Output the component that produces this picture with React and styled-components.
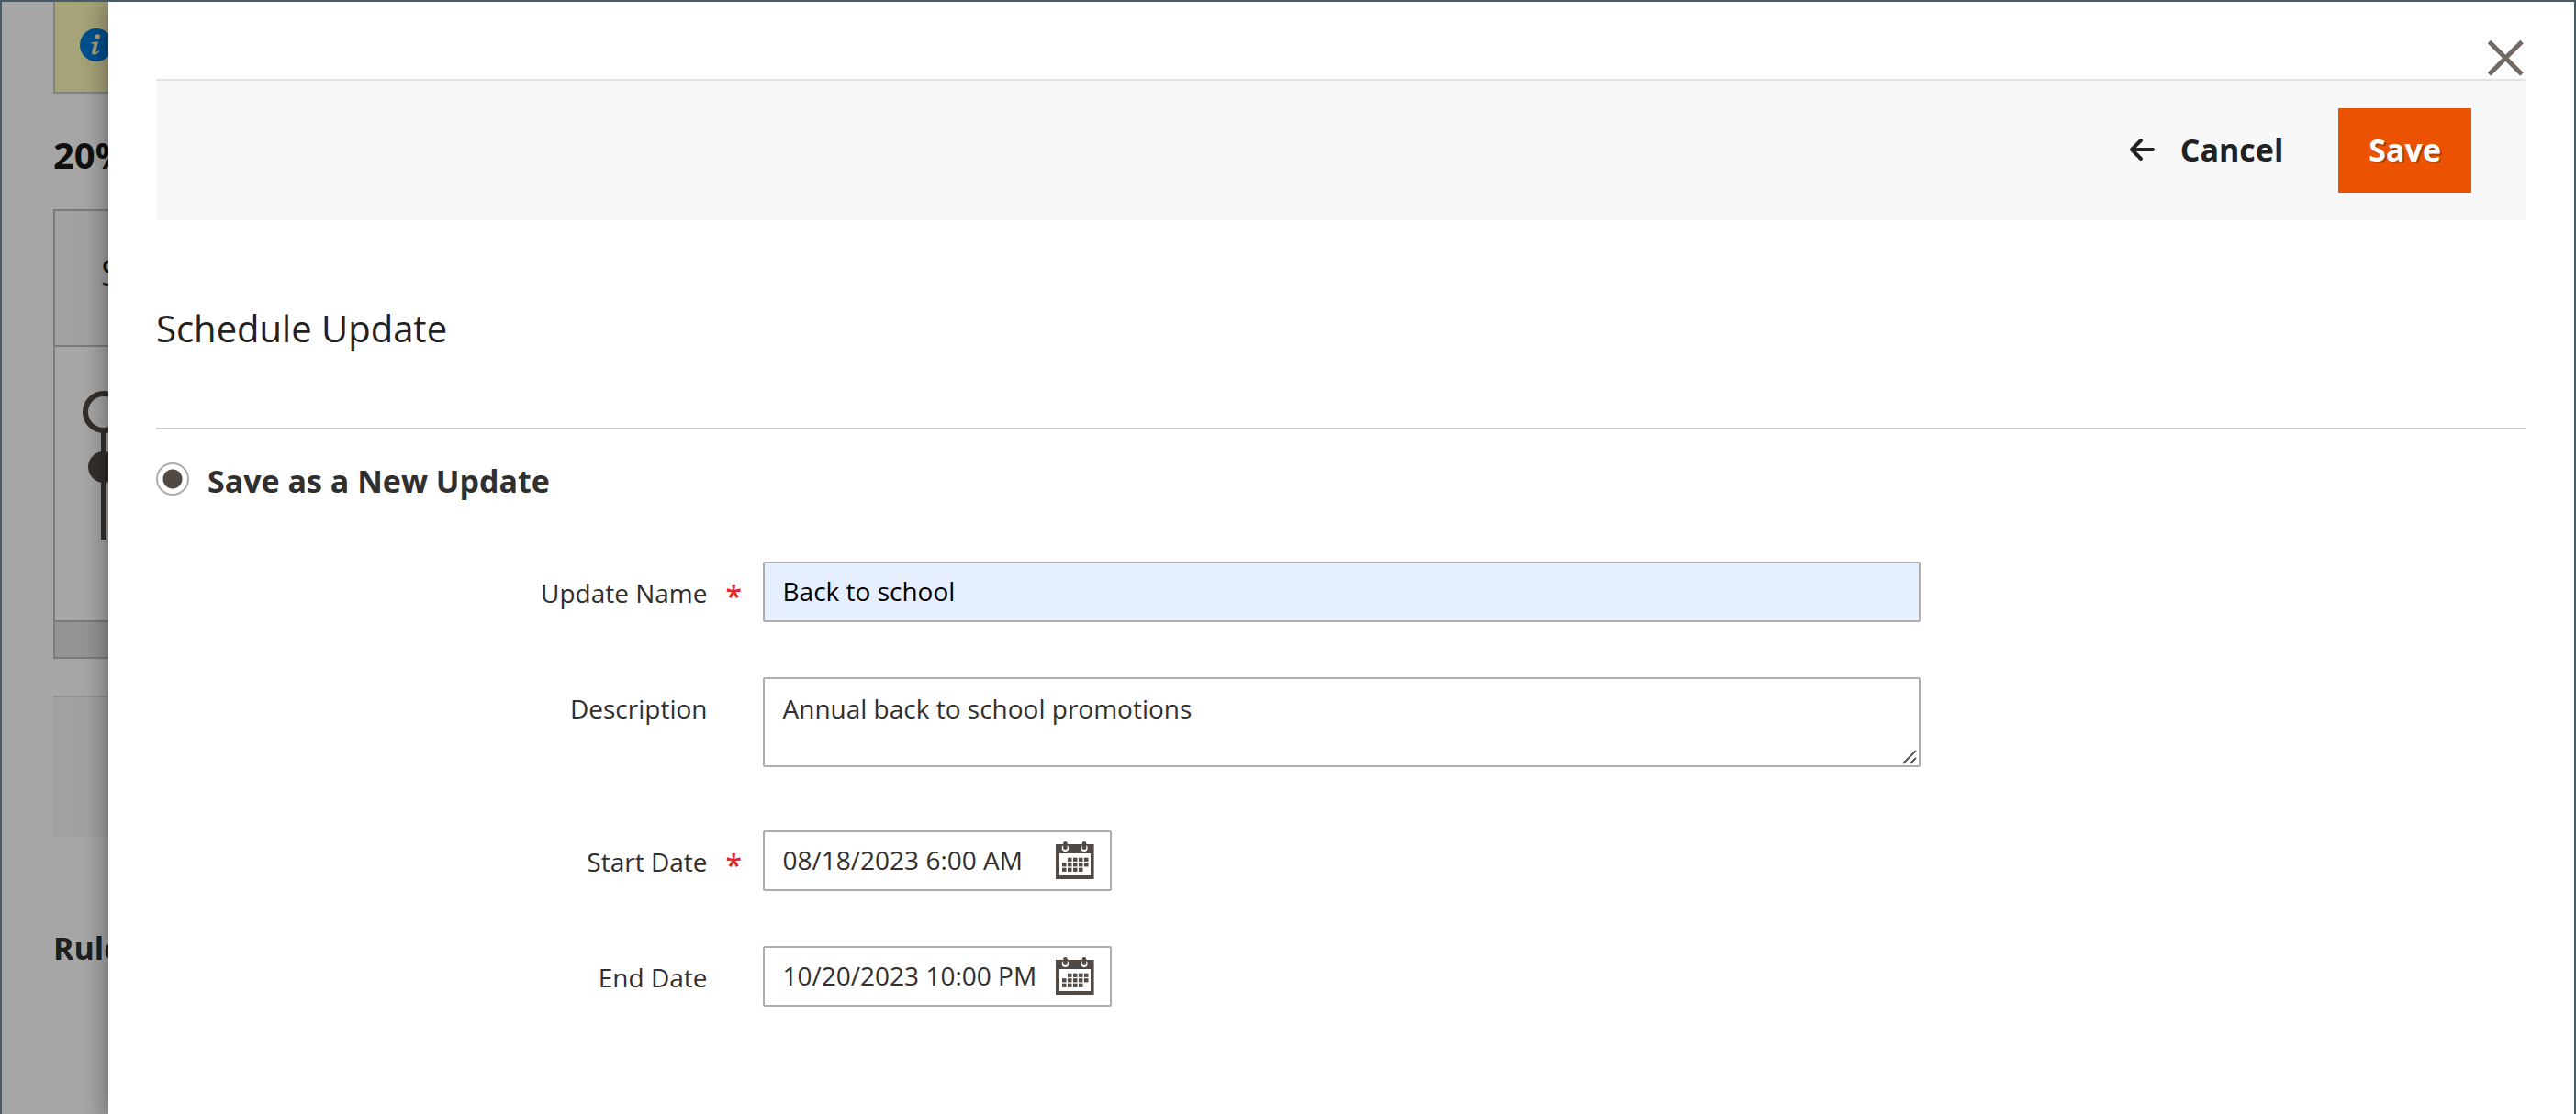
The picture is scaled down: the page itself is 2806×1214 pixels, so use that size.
import React, { useState } from "react";
import styled, { createGlobalStyle } from "styled-components";

const GlobalStyle = createGlobalStyle`
  *, *::before, *::after { box-sizing: border-box; }
  body {
    margin: 0;
    font-family: "Open Sans", "Noto Sans", sans-serif;
    font-size: 28px;
    color: #303030;
    background: #fff;
  }
  button, input, textarea { font: inherit; color: inherit; }
`;

const Frame = styled.div`
  position: relative;
  min-height: 100vh;
  border: 2px solid #465b66;
  border-bottom: 0;
  overflow: hidden;
`;

/* Page behind the panel */
const Backdrop = styled.div`
  position: absolute;
  inset: 0;
  padding-left: 56px;
  overflow: hidden;
  &::after {
    content: "";
    position: absolute;
    inset: 0;
    background: rgba(0, 0, 0, 0.35);
  }
`;

const Notice = styled.div`
  height: 100px;
  padding: 29px 27px;
  background: #fffbbb;
  border: solid #c8c8c8;
  border-width: 0 0 2px 2px;
`;

const RuleName = styled.h2`
  margin: 40px 0 0;
  font-size: 40px;
  font-weight: 700;
  line-height: 54px;
  color: #1a1a1a;
`;

const Timeline = styled.div`
  margin-top: 32px;
  border: 2px solid #bdbdbd;
  border-right: 0;
`;

const TimelineHead = styled.div`
  height: 146px;
  padding: 40px 50px;
  font-size: 40px;
  line-height: 54px;
  color: #1a1a1a;
  background: #f8f8f8;
`;

const TimelineBody = styled.div`
  height: 302px;
  padding: 48px 30px;
  border: solid #bdbdbd;
  border-width: 2px 0;
`;

const TimelineScroll = styled.div`
  height: 38px;
  background: #e3e3e3;
`;

const ActionStrip = styled.div`
  height: 154px;
  margin-top: 40px;
  background: #f8f8f8;
  border-top: 2px solid #e3e3e3;
`;

const SectionName = styled.h3`
  margin: 98px 0 0;
  font-size: 34px;
  font-weight: 700;
  line-height: 46px;
`;

/* Slide-out panel */
const Panel = styled.section`
  position: relative;
  min-height: 100vh;
  margin-left: 116px;
  padding: 0 52px 60px;
  background: #fff;
  box-shadow: 0 0 24px 4px rgba(0, 0, 0, 0.35);
`;

const PanelTop = styled.header`
  display: flex;
  justify-content: flex-end;
  align-items: flex-end;
  height: 84px;
`;

const PlainButton = styled.button`
  display: flex;
  align-items: center;
  padding: 0;
  background: none;
  border: 0;
  cursor: pointer;
`;

const Toolbar = styled.div`
  display: flex;
  justify-content: flex-end;
  align-items: center;
  gap: 60px;
  padding: 30px 60px;
  background: #f8f8f8;
  border-top: 2px solid #e3e3e3;
`;

const ToolbarButton = styled(PlainButton)`
  height: 92px;
  padding-bottom: 2px;
  font-size: 34px;
  font-weight: 700;
`;

const CancelButton = styled(ToolbarButton)`
  gap: 27px;
  color: #222;
`;

const SaveButton = styled(ToolbarButton)`
  padding-left: 33px;
  padding-right: 33px;
  color: #fff;
  background: #eb5202;
  text-shadow: 2px 2px 0 rgba(0, 0, 0, 0.25);
`;

const Title = styled.h1`
  margin: 91px 0 0;
  padding-bottom: 81px;
  font-size: 40px;
  font-weight: 400;
  line-height: 54px;
  color: #222;
  border-bottom: 2px solid #ccc;
`;

const Choice = styled.div`
  display: flex;
  align-items: flex-start;
  gap: 20px;
  margin: 36px 0 68px;
`;

const Radio = styled.input`
  appearance: none;
  width: 36px;
  height: 36px;
  margin: 0;
  border: 2px solid #adadad;
  border-radius: 50%;
  background: radial-gradient(circle, #514943 10px, #fff 11px);
`;

const ChoiceLabel = styled.label`
  font-size: 34px;
  font-weight: 700;
  line-height: 40px;
`;

const Fields = styled.div`
  display: grid;
  gap: 58px;
`;

const Field = styled.div`
  display: grid;
  grid-template-columns: calc(25% - 45px) calc(50% - 30px);
  column-gap: 60px;
  align-items: start;
`;

const FieldLabel = styled.label`
  position: relative;
  line-height: 68px;
  text-align: right;
`;

const Required = styled.span`
  position: absolute;
  top: 4px;
  left: 100%;
  margin-left: 20px;
  font-size: 32px;
  font-weight: 600;
  color: #e22626;
`;

const TextInput = styled.input`
  width: 100%;
  height: 66px;
  padding: 0 20px 2px;
  color: ${(p) => (p.$filled ? "#000" : "#303030")};
  background: ${(p) => (p.$filled ? "#e6efff" : "#fff")};
  border: 2px solid #adadad;
  border-radius: 2px;
`;

const TextAreaBox = styled.div`
  position: relative;
  margin-bottom: 11px;
`;

const TextArea = styled.textarea`
  display: block;
  width: 100%;
  height: 98px;
  padding: 13px 20px;
  line-height: 38px;
  border: 2px solid #adadad;
  border-radius: 2px;
  background: #fff;
  resize: vertical;
  overflow: hidden;
  &::-webkit-resizer { background: transparent; }
`;

const Grip = styled.svg`
  position: absolute;
  right: 4px;
  bottom: 3px;
  pointer-events: none;
`;

const DateBox = styled.div`
  display: flex;
  align-items: center;
  width: 380px;
  height: 66px;
  padding-right: 17px;
  border: 2px solid #adadad;
  border-radius: 2px;
`;

const DateInput = styled.input`
  flex: 1;
  min-width: 0;
  height: 62px;
  padding: 0 0 2px 20px;
  border: 0;
  background: none;
`;

const InfoIcon = () => (
  <svg width="36" height="36" viewBox="0 0 36 36" aria-hidden="true" display="block">
    <circle cx="18" cy="18" r="18" fill="#007bdb" />
    <circle cx="19.4" cy="9" r="2.7" fill="#fffbbb" />
    <path d="M12.5 15.3 20 14.2 17.4 25c-.3 1.3.6 1.2 1.5.3l1.6-1.4.8.8c-2 2.6-4 3.9-6 3.9-2 0-2.6-1.3-2-3.5l1.8-7c.3-1.2 0-1.5-.8-1.5h-2z" fill="#fffbbb" />
  </svg>
);

const MarkerIcon = () => (
  <svg width="46" height="162" viewBox="0 0 46 162" aria-hidden="true" display="block">
    <circle cx="23" cy="23" r="20" fill="none" stroke="#514943" strokeWidth="6" />
    <path d="M23 43v119" stroke="#514943" strokeWidth="6" />
    <circle cx="23" cy="83" r="17" fill="#514943" />
  </svg>
);

const CloseIcon = () => (
  <svg width="46" height="46" viewBox="0 0 46 46" aria-hidden="true">
    <path d="M5.5 5.5 41 41M41 5.5 5.5 41" stroke="#736963" strokeWidth="5" />
  </svg>
);

const ArrowIcon = () => (
  <svg width="30" height="26" viewBox="0 0 30 26" fill="none" stroke="#222" strokeWidth="4" strokeLinecap="round" strokeLinejoin="round" aria-hidden="true">
    <path d="M4 13h23M14 3 4 13l10 10" />
  </svg>
);

const GripIcon = () => (
  <Grip width="16" height="16" viewBox="0 0 16 16" stroke="#555" strokeWidth="2" aria-hidden="true">
    <path d="M1 15 15 1M9 15l6-6" />
  </Grip>
);

const dayCells = [
  [1, 0], [2, 0], [3, 0], [4, 0],
  [0, 1], [1, 1], [2, 1], [3, 1], [4, 1],
  [0, 2], [1, 2], [2, 2], [3, 2],
];

const CalendarIcon = () => (
  <svg width="42" height="42" viewBox="0 0 42 42" fill="#514943" aria-hidden="true">
    <path d="M0 3h41.600v38H0zM4 13v24h34V13z" fillRule="evenodd" />
    {[10.4, 31].map((x) => (
      <g key={x}>
        <circle cx={x} cy="7.2" r="3.7" fill="#fff" />
        <rect x={x - 2.3} y="0" width="4.6" height="9" rx="2.3" />
      </g>
    ))}
    {dayCells.map(([c, r]) => (
      <rect key={`${c}-${r}`} x={7 + c * 6} y={17.7 + r * 5.5} width="4.5" height="4.2" />
    ))}
  </svg>
);

function DateField({ id, label, required, initial }) {
  const [value, setValue] = useState(initial);
  return (
    <Field>
      <FieldLabel htmlFor={id}>
        {label}
        {required && <Required>*</Required>}
      </FieldLabel>
      <DateBox>
        <DateInput id={id} value={value} onChange={(e) => setValue(e.target.value)} />
        <PlainButton type="button" aria-label={`Pick ${label}`}>
          <CalendarIcon />
        </PlainButton>
      </DateBox>
    </Field>
  );
}

export default function App() {
  return (
    <>
      <GlobalStyle />
      <Frame>
        <Backdrop aria-hidden="true">
          <Notice><InfoIcon /></Notice>
          <RuleName>20%</RuleName>
          <Timeline>
            <TimelineHead>S</TimelineHead>
            <TimelineBody><MarkerIcon /></TimelineBody>
            <TimelineScroll />
          </Timeline>
          <ActionStrip />
          <SectionName>Rule</SectionName>
        </Backdrop>
        <Panel>
          <PanelTop>
            <PlainButton type="button" aria-label="Close"><CloseIcon /></PlainButton>
          </PanelTop>
          <Toolbar>
            <CancelButton type="button"><ArrowIcon />Cancel</CancelButton>
            <SaveButton type="submit" form="schedule-update">Save</SaveButton>
          </Toolbar>
          <Title>Schedule Update</Title>
          <form id="schedule-update" onSubmit={(e) => e.preventDefault()}>
            <Choice>
              <Radio type="radio" id="save-new" name="mode" defaultChecked />
              <ChoiceLabel htmlFor="save-new">Save as a New Update</ChoiceLabel>
            </Choice>
            <Fields>
              <Field>
                <FieldLabel htmlFor="update-name">Update Name<Required>*</Required></FieldLabel>
                <TextInput id="update-name" $filled defaultValue="Back to school" />
              </Field>
              <Field>
                <FieldLabel htmlFor="description">Description</FieldLabel>
                <TextAreaBox>
                  <TextArea id="description" defaultValue="Annual back to school promotions" />
                  <GripIcon />
                </TextAreaBox>
              </Field>
              <DateField id="start-date" label="Start Date" required initial="08/18/2023 6:00 AM" />
              <DateField id="end-date" label="End Date" initial="10/20/2023 10:00 PM" />
            </Fields>
          </form>
        </Panel>
      </Frame>
    </>
  );
}
